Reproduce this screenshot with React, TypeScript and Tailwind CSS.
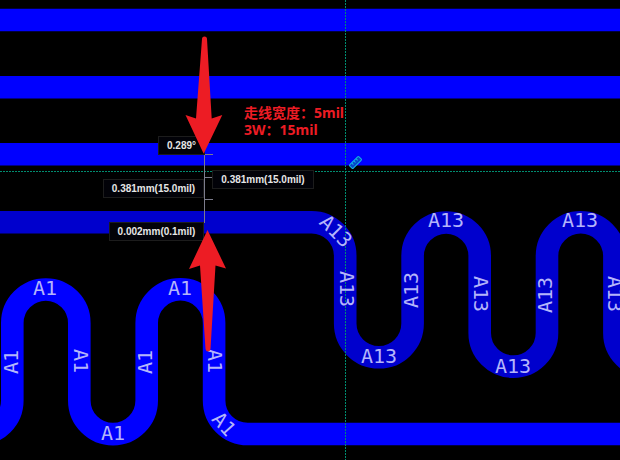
type TraceLabel = { text: string; x: number; y: number; angle: number };

const traceLabels: TraceLabel[] = [
  { text: "A1", x: 45, y: 288, angle: 0 },
  { text: "A1", x: 11, y: 362, angle: -90 },
  { text: "A1", x: 81, y: 361, angle: 90 },
  { text: "A1", x: 113, y: 433, angle: 0 },
  { text: "A1", x: 145, y: 362, angle: -90 },
  { text: "A1", x: 180, y: 288, angle: 0 },
  { text: "A1", x: 215, y: 361, angle: 90 },
  { text: "A1", x: 224, y: 424, angle: 48 },
  { text: "A13", x: 336, y: 231, angle: 45 },
  { text: "A13", x: 347, y: 289, angle: 90 },
  { text: "A13", x: 379, y: 356, angle: 0 },
  { text: "A13", x: 411, y: 290, angle: -90 },
  { text: "A13", x: 446, y: 220, angle: 0 },
  { text: "A13", x: 481, y: 294, angle: 90 },
  { text: "A13", x: 513, y: 366, angle: 0 },
  { text: "A13", x: 545, y: 295, angle: -90 },
  { text: "A13", x: 580, y: 220, angle: 0 },
  { text: "A13", x: 615, y: 294, angle: 90 },
];

const measurements = [
  { text: "0.289°", place: "left-[158px] top-[136px] w-[47px]" },
  { text: "0.381mm(15.0mil)", place: "left-[103px] top-[179px] w-[101px]" },
  { text: "0.381mm(15.0mil)", place: "left-[212px] top-[170px] w-[102px]" },
  { text: "0.002mm(0.1mil)", place: "left-[109px] top-[222px] w-[95px]" },
];

function Board() {
  return (
    <svg className="absolute inset-0 h-full w-full" aria-label="PCB traces">
      <g fill="none" strokeWidth="22.6">
        <g stroke="#0000ff">
          <path d="M0 20H4000M0 87.2H4000M0 154.3H4000" />
          <path d="M-21.3 434A33.6 33.6 0 0 0 12.3 400.4V323A33.5 33.5 0 0 1 79.3 323V400.4A33.7 33.7 0 0 0 146.7 400.4V323A33.7 33.7 0 0 1 214.1 323V400.4A33.6 33.6 0 0 0 247.7 434H4000" />
        </g>
        <path
          stroke="#0000cd"
          d="M0 222.2H311.6A33.6 33.6 0 0 1 345.2 255.8V323.6A33.7 33.7 0 0 0 412.6 323.6V256A33.5 33.5 0 0 1 479.7 256V333A33.6 33.6 0 0 0 547 333V256A33.7 33.7 0 0 1 614.4 256V333A33.6 33.6 0 0 0 681.7 333"
        />
      </g>
      <path d="M0 171.5H4000M345.5 0V4000" stroke="#008c70" strokeDasharray="2 1" fill="none" />
      <g fill="#b4b4fa" fontSize="20" textAnchor="middle" className="font-['DejaVu_Sans_Mono',monospace]">
        {traceLabels.map((l, i) => (
          <text key={i} transform={`translate(${l.x} ${l.y}) rotate(${l.angle})`} y="7">
            {l.text}
          </text>
        ))}
      </g>
      <path d="M204.5 154V223M205 154.5H213M205 177.5H213M205 199.5H213" stroke="#7c7c8c" fill="none" />
      <g transform="translate(355.5 162.5) rotate(-45)" fill="none" stroke="#12b8e0">
        <rect x="-6.5" y="-2.5" width="13" height="5" rx="1" fill="#0646c8" />
        <path d="M-3 -2V0M0 -2V0M3 -2V0" />
      </g>
    </svg>
  );
}

function Arrows() {
  return (
    <svg className="absolute inset-0 h-full w-full" aria-hidden="true">
      <g fill="#ed1c24">
        <path d="M202 39Q202 36.5 204.5 36.5T207 39L211.7 118.5L222.3 115L203.7 153.7L185.5 115L196 118.5Z" />
        <path d="M207.5 230L226 268.5L215.5 265.5L210.5 349Q210 351.5 208 351.5T205.5 349L200 265.5L189 269Z" />
      </g>
    </svg>
  );
}

export default function App() {
  return (
    <main className="relative min-h-screen w-full overflow-hidden bg-black">
      <Board />
      {measurements.map((m, i) => (
        <output
          key={i}
          className={`absolute flex h-[19px] items-center justify-center border border-[#1c1c1c] bg-[#020208] font-['Liberation_Sans',Arial,sans-serif] text-[10px] leading-none font-bold whitespace-nowrap text-[#e6e6e6] ${m.place}`}
        >
          {m.text}
        </output>
      ))}
      <div className="absolute top-[104px] left-[244px] font-['Noto_Sans','Noto_Sans_CJK_SC',sans-serif] text-[14px] leading-[17px] font-bold whitespace-nowrap text-[#ed1c24]">
        <p>走线宽度：5mil</p>
        <p>3W：15mil</p>
      </div>
      <Arrows />
    </main>
  );
}
